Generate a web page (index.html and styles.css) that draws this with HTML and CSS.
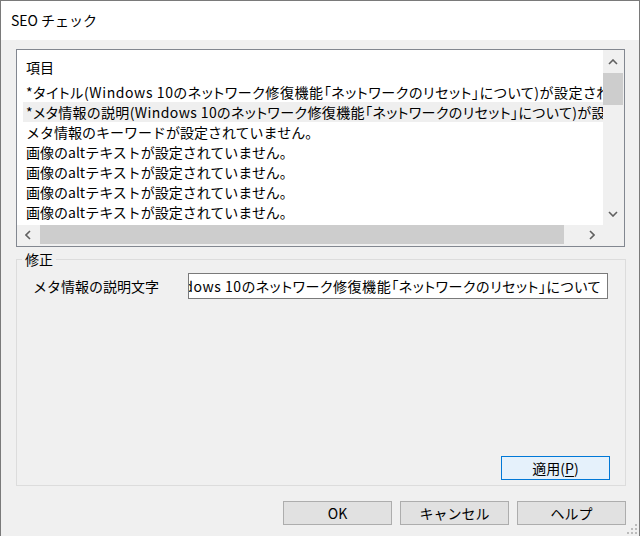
FILE: index.html
```html
<!DOCTYPE html>
<html lang="ja">
<head>
<meta charset="utf-8">
<title>SEO チェック</title>
<link rel="stylesheet" href="styles.css">
</head>
<body>
<div class="window">
  <div class="titlebar">SEO チェック</div>
  <div class="client">
    <div class="listbox">
      <div class="list-content">
        <div class="list-header">項目</div>
        <div class="row long">*タイトル(Windows 10のネットワーク修復機能「ネットワークのリセット」について)が設定されていません。</div>
        <div class="row long tight selected">*メタ情報の説明(Windows 10のネットワーク修復機能「ネットワークのリセット」について)が設定されていません。</div>
        <div class="row">メタ情報のキーワードが設定されていません。</div>
        <div class="row">画像のaltテキストが設定されていません。</div>
        <div class="row">画像のaltテキストが設定されていません。</div>
        <div class="row">画像のaltテキストが設定されていません。</div>
        <div class="row">画像のaltテキストが設定されていません。</div>
      </div>
      <div class="vscroll">
        <div class="sbtn"><svg width="10" height="6" viewBox="0 0 10 6"><polyline points="1,5 5,1 9,5" fill="none" stroke="#606060" stroke-width="1.6"/></svg></div>
        <div class="vthumb"></div>
        <div class="vtrack"></div>
        <div class="sbtn"><svg width="10" height="6" viewBox="0 0 10 6"><polyline points="1,1 5,5 9,1" fill="none" stroke="#606060" stroke-width="1.6"/></svg></div>
      </div>
      <div class="hscroll">
        <div class="hbtn"><svg width="6" height="10" viewBox="0 0 6 10"><polyline points="5,1 1,5 5,9" fill="none" stroke="#606060" stroke-width="1.6"/></svg></div>
        <div class="hthumb"></div>
        <div class="htrack"></div>
        <div class="hbtn"><svg width="6" height="10" viewBox="0 0 6 10"><polyline points="1,1 5,5 1,9" fill="none" stroke="#606060" stroke-width="1.6"/></svg></div>
      </div>
      <div class="corner"></div>
    </div>

    <fieldset class="group">
      <legend class="group-title">修正</legend>
      <div class="group-body">
        <div class="field-row">
          <span class="field-label">メタ情報の説明文字</span>
          <div class="textbox"><span class="textbox-text">Windows 10のネットワーク修復機能「ネットワークのリセット」について</span></div>
        </div>
        <div class="apply-row">
          <button class="btn btn-default">適用(<u>P</u>)</button>
        </div>
      </div>
    </fieldset>

    <div class="dialog-buttons">
      <button class="btn">OK</button>
      <button class="btn">キャンセル</button>
      <button class="btn">ヘルプ</button>
    </div>
  </div>
  <svg class="grip" width="14" height="14" viewBox="0 0 14 14">
    <g fill="#bcbcbc">
      <rect x="10" y="2" width="2" height="2"/>
      <rect x="6" y="6" width="2" height="2"/>
      <rect x="10" y="6" width="2" height="2"/>
      <rect x="2" y="10" width="2" height="2"/>
      <rect x="6" y="10" width="2" height="2"/>
      <rect x="10" y="10" width="2" height="2"/>
    </g>
  </svg>
</div>
</body>
</html>
```

FILE: styles.css
```css
* { box-sizing: border-box; }
html, body {
  margin: 0;
  padding: 0;
  width: 640px;
  height: 536px;
  overflow: hidden;
  background: #f0f0f0;
}
body {
  font-family: "Noto Sans CJK JP", "Noto Sans", sans-serif;
  font-size: 14px;
  color: #000;
}
.window {
  position: relative;
  width: 640px;
  height: 536px;
  border: 1px solid #7a7a7a;
  border-bottom: none;
  background: #f0f0f0;
  display: flex;
  flex-direction: column;
}
.titlebar {
  height: 39px;
  background: #fff;
  padding-left: 10px;
  display: flex;
  align-items: center;
  font-size: 14px;
  line-height: 20px;
  padding-bottom: 1px;
}
.client {
  flex: 1;
  padding: 9px 14px 0 15px;
  display: flex;
  flex-direction: column;
}
.listbox {
  height: 198px;
  border: 1px solid #828790;
  background: #fff;
  display: grid;
  grid-template-columns: 1fr 21px;
  grid-template-rows: 1fr 21px;
}
.list-content {
  overflow: hidden;
  white-space: nowrap;
  line-height: 20px;
}
.list-header {
  height: 32px;
  padding: 7px 0 0 9px;
}
.row {
  height: 20px;
  margin-left: 6px;
  padding-left: 3px;
}
.row.long {
  font-feature-settings: "palt";
  letter-spacing: 0.6px;
}
.row.long.tight { letter-spacing: 0.4px; }
.row.selected { background: #efefef; }
.vscroll {
  background: #f0f0f0;
  display: flex;
  flex-direction: column;
  padding-right: 1px;
}
.sbtn {
  height: 23px;
  display: flex;
  align-items: center;
  justify-content: center;
  flex: none;
}
.vthumb {
  height: 32px;
  background: #cdcdcd;
  flex: none;
}
.vtrack { flex: 1; }
.hscroll {
  background: #f0f0f0;
  display: flex;
  padding-bottom: 2px;
}
.hbtn {
  width: 22px;
  display: flex;
  align-items: center;
  justify-content: center;
  flex: none;
}
.hthumb {
  width: 524px;
  margin-left: 1px;
  background: #cdcdcd;
  flex: none;
}
.htrack { flex: 1; }
.corner { background: #f0f0f0; }

.group {
  margin: 2px -1px 0 0;
  padding: 0 15px 0 16px;
  border: 1px solid #dcdcdc;
  min-width: 0;
}
.group-title {
  margin-left: -11px;
  padding: 0 3px;
  line-height: 20px;
}
.group-body {
  height: 216px;
  padding: 4px 0 5px;
  display: flex;
  flex-direction: column;
  justify-content: space-between;
}
.field-row {
  display: flex;
  align-items: center;
  height: 26px;
}
.field-label {
  width: 155px;
  flex: none;
}
.textbox {
  width: 420px;
  height: 26px;
  border: 1px solid #7a7a7a;
  background: #fff;
  display: flex;
  justify-content: flex-end;
  align-items: center;
  overflow: hidden;
  white-space: nowrap;
  padding-right: 6px;
}
.textbox-text {
  flex: none;
  font-feature-settings: "palt";
  letter-spacing: 0.55px;
}
.apply-row {
  display: flex;
  justify-content: flex-end;
}
.btn {
  font-family: inherit;
  font-size: 14px;
  color: #000;
  width: 109px;
  height: 24px;
  border: 1px solid #adadad;
  background: #e1e1e1;
  padding: 0;
  line-height: 20px;
}
.btn-default {
  border-color: #0078d7;
  background: #e5f1fb;
}
.btn u { text-underline-offset: 2px; }
.dialog-buttons {
  margin: 15px -1px 0 0;
  display: flex;
  justify-content: flex-end;
  gap: 8px;
}
.grip {
  position: absolute;
  right: 0;
  bottom: 0;
}
```
